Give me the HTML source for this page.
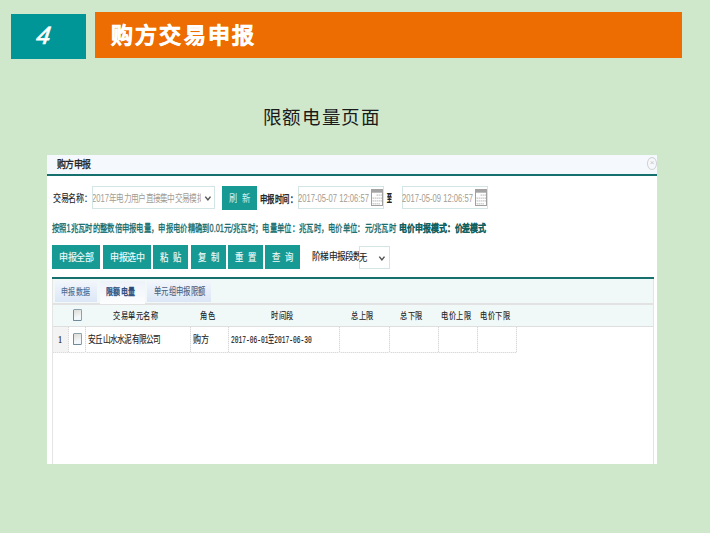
<!DOCTYPE html>
<html lang="zh-CN">
<head>
<meta charset="utf-8">
<style>
*{box-sizing:border-box;margin:0;padding:0}
html,body{width:710px;height:533px;overflow:hidden;background:#CFE7CB;font-family:"Liberation Sans",sans-serif}
.a{position:absolute}
.t{position:absolute;white-space:nowrap;text-spacing-trim:space-all;-webkit-text-stroke:.12px currentColor;font-size:10.5px;line-height:12px;color:#222;transform-origin:0 0;transform:scaleX(.79)}
.inp{position:absolute;border:1px solid #D3E5E5;background:#fff}
.btn{position:absolute;background:#189A94}
.bt{position:absolute;white-space:nowrap;font-size:10.5px;line-height:12px;color:#F2FBF9;-webkit-text-stroke:.15px currentColor;transform-origin:0 0;transform:scaleX(.79)}
.cal{position:absolute;width:12px;height:16px;border:1px solid #8c8c8c;background:#fff}
.cal:before{content:"";position:absolute;left:0;top:0;width:10px;height:3px;background:#9a9a9a}
.cal:after{content:"";position:absolute;left:1px;top:5px;width:8px;height:8px;background:repeating-linear-gradient(to bottom,#bbb 0 1px,transparent 1px 2.5px)}
.cb{position:absolute;width:9px;height:12px;border:1px solid #6f8a99;border-top-color:#8aa2ae;border-right-color:#8aa2ae;border-radius:1.5px;background:linear-gradient(160deg,#dcdcd6,#f4f8fa 70%,#eaf6fb)}
.vl{position:absolute;width:1px;background:repeating-linear-gradient(to bottom,#d6d6d6 0 1px,#f2f2f2 1px 2px)}
</style>
</head>
<body>
<div class="a" style="left:11px;top:13.5px;width:75px;height:45.5px;background:#009697"></div>
<div class="a" style="left:34.7px;top:13.3px;width:20px;height:46px;color:#fff;font-weight:normal;-webkit-text-stroke:.7px #fff;font-style:italic;font-size:25px;line-height:44px;transform:skewX(-8deg);transform-origin:0 35px">4</div>
<div class="a" style="left:95px;top:12px;width:587px;height:46px;background:#ED6D02"></div>
<div class="a" style="left:111px;top:21.2px;color:#fff;font-weight:bold;-webkit-text-stroke:.45px #fff;font-size:22px;line-height:30px;letter-spacing:2.2px;white-space:nowrap">购方交易申报</div>
<div class="a" style="left:262.5px;top:104px;color:#1a1a1a;font-size:18.5px;letter-spacing:.7px;font-weight:300;line-height:28px;white-space:nowrap">限额电量页面</div>

<!-- dialog -->
<div class="a" style="left:47px;top:155px;width:610px;height:309px;background:#fff"></div>
<div class="a" style="left:47px;top:155px;width:610px;height:19px;background:#F5F9FE"></div>
<div class="t" style="left:57px;top:158px;font-size:10.5px;-webkit-text-stroke:.35px currentColor;line-height:13px;transform:scaleX(.846)">购方申报</div>
<div class="a" style="left:647px;top:157px;width:10px;height:13px;border:1px solid #d0d0d0;border-radius:50%"></div>
<div class="a" style="left:647px;top:157px;width:10px;height:13px;color:#c4c4c4;font-size:8px;line-height:12px;text-align:center">×</div>
<div class="a" style="left:47px;top:174px;width:610px;height:2px;background:#15706E"></div>

<!-- row1 -->
<div class="t" style="left:53px;top:192px;transform:scaleX(.763)">交易名称：</div>
<div class="inp" style="left:92px;top:186px;width:123px;height:23px"></div>
<div class="a" style="left:93px;top:188px;width:107.5px;height:18px;overflow:hidden">
  <div class="t" style="left:-1px;top:4px;color:#A29C92;-webkit-text-stroke:0;transform:scaleX(.73)">2017年电力用户直接集中交易模拟</div>
</div>
<div class="a" style="left:204px;top:193px;width:9px;height:9px">
 <svg style="display:block" width="9" height="9" viewBox="0 0 9 9"><path d="M1.3 3.6 L3.9 6.9 L6.5 3.6" stroke="#555" stroke-width="1.5" fill="none"/></svg>
</div>
<div class="btn" style="left:222px;top:186px;width:35px;height:24px"></div>
<div class="bt" style="left:228.5px;top:192px;color:#D6EDE8;-webkit-text-stroke:0">刷</div><div class="bt" style="left:242px;top:192px;color:#D6EDE8;-webkit-text-stroke:0">新</div>
<div class="t" style="left:260px;top:193.5px;-webkit-text-stroke:.4px currentColor;font-size:10px;transform:scaleX(.738)">申报时间：</div>
<div class="inp" style="left:298px;top:186px;width:86px;height:23px"></div>
<div class="t" style="left:298px;top:192px;color:#A29C92;-webkit-text-stroke:0;font-size:10.75px;transform:scaleX(.71)">2017-05-07 12:06:57</div>
<div class="a" style="left:371px;top:189px"><svg style="display:block" width="12" height="17" viewBox="0 0 12 17"><rect x="0.5" y="0.5" width="11" height="16" fill="#fff" stroke="#a0a0a0"/><rect x="0" y="0" width="12" height="3.7" fill="#a3a3a3"/><rect x="5.6" y="5.5" width="1.2" height="1.2" fill="#b4b4b4"/><rect x="7.6" y="5.5" width="1.2" height="1.2" fill="#b4b4b4"/><rect x="9.6" y="5.5" width="1.2" height="1.2" fill="#b4b4b4"/><rect x="1.6" y="8.5" width="1.2" height="1.2" fill="#b4b4b4"/><rect x="3.6" y="8.5" width="1.2" height="1.2" fill="#b4b4b4"/><rect x="5.6" y="8.5" width="1.2" height="1.2" fill="#b4b4b4"/><rect x="7.6" y="8.5" width="1.2" height="1.2" fill="#b4b4b4"/><rect x="9.6" y="8.5" width="1.2" height="1.2" fill="#b4b4b4"/><rect x="1.6" y="11.3" width="1.2" height="1.2" fill="#b4b4b4"/><rect x="3.6" y="11.3" width="1.2" height="1.2" fill="#b4b4b4"/><rect x="5.6" y="11.3" width="1.2" height="1.2" fill="#b4b4b4"/><rect x="7.6" y="11.3" width="1.2" height="1.2" fill="#b4b4b4"/><rect x="9.6" y="11.3" width="1.2" height="1.2" fill="#b4b4b4"/><rect x="1.6" y="14.2" width="1.2" height="1.2" fill="#b4b4b4"/><rect x="3.6" y="14.2" width="1.2" height="1.2" fill="#b4b4b4"/><rect x="5.6" y="14.2" width="1.2" height="1.2" fill="#b4b4b4"/><rect x="7.6" y="14.2" width="1.2" height="1.2" fill="#b4b4b4"/></svg></div>
<div class="t" style="left:387px;top:192px;font-weight:bold;transform:scaleX(.45)">至</div>
<div class="inp" style="left:402px;top:186px;width:86px;height:23px"></div>
<div class="t" style="left:402px;top:192px;color:#A29C92;-webkit-text-stroke:0;font-size:10.75px;transform:scaleX(.71)">2017-05-09 12:06:57</div>
<div class="a" style="left:475px;top:189px"><svg style="display:block" width="12" height="17" viewBox="0 0 12 17"><rect x="0.5" y="0.5" width="11" height="16" fill="#fff" stroke="#a0a0a0"/><rect x="0" y="0" width="12" height="3.7" fill="#a3a3a3"/><rect x="5.6" y="5.5" width="1.2" height="1.2" fill="#b4b4b4"/><rect x="7.6" y="5.5" width="1.2" height="1.2" fill="#b4b4b4"/><rect x="9.6" y="5.5" width="1.2" height="1.2" fill="#b4b4b4"/><rect x="1.6" y="8.5" width="1.2" height="1.2" fill="#b4b4b4"/><rect x="3.6" y="8.5" width="1.2" height="1.2" fill="#b4b4b4"/><rect x="5.6" y="8.5" width="1.2" height="1.2" fill="#b4b4b4"/><rect x="7.6" y="8.5" width="1.2" height="1.2" fill="#b4b4b4"/><rect x="9.6" y="8.5" width="1.2" height="1.2" fill="#b4b4b4"/><rect x="1.6" y="11.3" width="1.2" height="1.2" fill="#b4b4b4"/><rect x="3.6" y="11.3" width="1.2" height="1.2" fill="#b4b4b4"/><rect x="5.6" y="11.3" width="1.2" height="1.2" fill="#b4b4b4"/><rect x="7.6" y="11.3" width="1.2" height="1.2" fill="#b4b4b4"/><rect x="9.6" y="11.3" width="1.2" height="1.2" fill="#b4b4b4"/><rect x="1.6" y="14.2" width="1.2" height="1.2" fill="#b4b4b4"/><rect x="3.6" y="14.2" width="1.2" height="1.2" fill="#b4b4b4"/><rect x="5.6" y="14.2" width="1.2" height="1.2" fill="#b4b4b4"/><rect x="7.6" y="14.2" width="1.2" height="1.2" fill="#b4b4b4"/></svg></div>

<!-- row2 -->
<div class="t" style="left:52px;top:223px;color:#116A6A;-webkit-text-stroke:.3px currentColor;font-size:10px;transform:scaleX(.731)">按照1兆瓦时的整数倍申报电量，申报电价精确到0.01元/兆瓦时；电量单位：兆瓦时，电价单位：元/兆瓦时</div>
<div class="t" style="left:399.3px;top:223px;color:#10605E;font-size:10px;font-weight:bold;transform:scaleX(.793)">电价申报模式：价差模式</div>

<!-- row3 buttons -->
<div class="btn" style="left:52px;top:245px;width:48px;height:24px"></div>
<div class="bt" style="left:59px;top:251px;transform:scaleX(.854)">申报全部</div>
<div class="btn" style="left:103px;top:245px;width:48px;height:24px"></div>
<div class="bt" style="left:110px;top:251px;transform:scaleX(.854)">申报选中</div>
<div class="btn" style="left:153px;top:245px;width:35px;height:24px"></div>
<div class="bt" style="left:159.5px;top:251px">粘</div><div class="bt" style="left:173px;top:251px">贴</div>
<div class="btn" style="left:191px;top:245px;width:35px;height:24px"></div>
<div class="bt" style="left:197.5px;top:251px">复</div><div class="bt" style="left:211px;top:251px">制</div>
<div class="btn" style="left:228px;top:245px;width:35px;height:24px"></div>
<div class="bt" style="left:234.5px;top:251px">重</div><div class="bt" style="left:248px;top:251px">置</div>
<div class="btn" style="left:265px;top:245px;width:35px;height:24px"></div>
<div class="bt" style="left:271.5px;top:251px">查</div><div class="bt" style="left:285px;top:251px">询</div>
<div class="t" style="left:312px;top:250px;transform:scaleX(.825)">阶梯申报段数:</div>
<div class="inp" style="left:359px;top:246px;width:31px;height:23px"></div>
<div class="t" style="left:359px;top:251px">无</div>
<div class="a" style="left:378px;top:253px;width:9px;height:9px">
 <svg style="display:block" width="9" height="9" viewBox="0 0 9 9"><path d="M1.3 3.6 L3.9 6.9 L6.5 3.6" stroke="#555" stroke-width="1.5" fill="none"/></svg>
</div>

<!-- panel -->
<div class="a" style="left:52px;top:277px;width:602px;height:187px;border-left:1px solid #e4e4e4;border-right:1px solid #e4e4e4"></div>
<div class="a" style="left:52px;top:277px;width:602px;height:2px;background:#15706E"></div>
<div class="a" style="left:53px;top:279px;width:600px;height:26px;background:#F1F9F8;border-bottom:2px solid #e2e2e2"></div>
<div class="a" style="left:55px;top:281px;width:42px;height:21px;background:linear-gradient(#F2F6FC,#DCE6F6)"></div>
<div class="a" style="left:100px;top:281px;width:45px;height:23px;background:linear-gradient(#EEF3FA,#FCFDFE)"></div>
<div class="a" style="left:147px;top:281px;width:64px;height:21px;background:linear-gradient(#F2F6FC,#DCE6F6)"></div>
<div class="t" style="left:61px;top:286px;color:#4A6A90;font-size:9.6px;transform:scaleX(.725)">申报数据</div>
<div class="t" style="left:106px;top:286px;color:#2B4A7A;-webkit-text-stroke:.4px currentColor;font-size:9.6px;transform:scaleX(.725)">限额电量</div>
<div class="t" style="left:154px;top:286px;color:#4A5F80;font-size:10px;transform:scaleX(.73)">单元组申报限额</div>

<!-- header row -->
<div class="a" style="left:53px;top:305px;width:600px;height:22px;background:#F1F9F8;border-bottom:1px solid #dedede"></div>
<div class="cb" style="left:73px;top:309px"></div>
<div class="t" style="left:113px;top:309.6px;font-size:9.6px;transform:scaleX(.75)">交易单元名称</div>
<div class="t" style="left:200px;top:309.6px;font-size:9.6px;transform:scaleX(.75)">角色</div>
<div class="t" style="left:271px;top:309.6px;font-size:9.6px;transform:scaleX(.75)">时间段</div>
<div class="t" style="left:351px;top:309.6px;font-size:9.6px;transform:scaleX(.75)">总上限</div>
<div class="t" style="left:400px;top:309.6px;font-size:9.6px;transform:scaleX(.75)">总下限</div>
<div class="t" style="left:441px;top:309.6px;font-size:9.6px;transform:scaleX(.75)">电价上限</div>
<div class="t" style="left:480px;top:309.6px;font-size:9.6px;transform:scaleX(.75)">电价下限</div>

<!-- data row -->
<div class="a" style="left:53px;top:327px;width:16px;height:25px;background:#F3F3F3"></div>
<div class="a" style="left:53px;top:352px;width:464px;height:1px;background:repeating-linear-gradient(to right,#dadada 0 1px,#f0f0f0 1px 2px)"></div>
<div class="vl" style="left:68px;top:327px;height:26px"></div>
<div class="vl" style="left:85px;top:327px;height:26px"></div>
<div class="vl" style="left:190px;top:327px;height:26px"></div>
<div class="vl" style="left:228px;top:327px;height:26px"></div>
<div class="vl" style="left:339px;top:327px;height:26px"></div>
<div class="vl" style="left:389px;top:327px;height:26px"></div>
<div class="vl" style="left:438px;top:327px;height:26px"></div>
<div class="vl" style="left:477px;top:327px;height:26px"></div>
<div class="vl" style="left:516px;top:327px;height:26px"></div>
<div class="t" style="left:58px;top:334px;font-family:'Liberation Serif',serif">1</div>
<div class="cb" style="left:73px;top:333px"></div>
<div class="t" style="left:88px;top:333px;transform:scaleX(.727)">安丘山水水泥有限公司</div>
<div class="t" style="left:193px;top:333px;transform:scaleX(.77)">购方</div>
<div class="t" style="left:231px;top:334px;font-family:'Liberation Mono',monospace;color:#111;-webkit-text-stroke:.15px currentColor;transform:scaleX(.593)">2017-06-01至2017-06-30</div>
</body>
</html>
